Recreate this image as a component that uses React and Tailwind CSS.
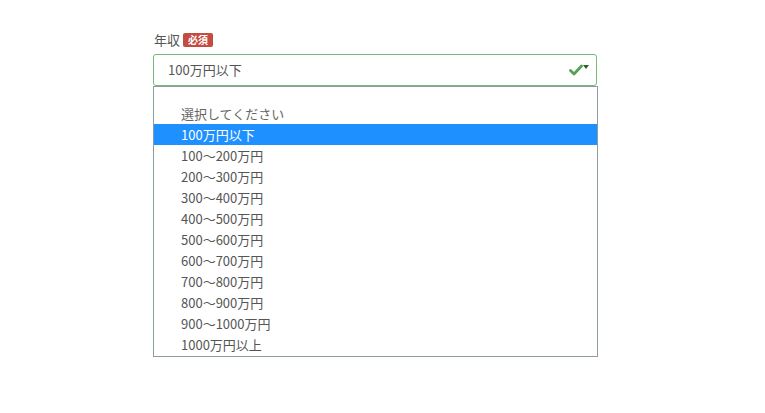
import React from 'react';

const options = [
  '100万円以下',
  '100～200万円',
  '200～300万円',
  '300～400万円',
  '400～500万円',
  '500～600万円',
  '600～700万円',
  '700～800万円',
  '800～900万円',
  '900～1000万円',
  '1000万円以上',
];

const font = { fontFamily: '"Noto Sans CJK JP", "Liberation Sans", sans-serif' };

export default function App() {
  const selected = '100万円以下';

  return (
    <div className="min-h-screen bg-white" style={font}>
      <div className="ml-[153px] w-[444px] pt-[32px]">
        {/* ラベル */}
        <div className="flex items-center h-[15px] mb-[7px]">
          <span className="text-[13px] text-[#555] ml-[1px] leading-none">年収</span>
          <span className="ml-[3px] bg-[#c44b41] text-white text-[10px] font-bold leading-none px-[5px] py-[2px] rounded-[2px]">
            必須
          </span>
        </div>

        {/* セレクトボックス */}
        <div className="flex items-center justify-between h-[32px] border border-[#78bb78] rounded-[3px] pl-[14px] pr-[7px]">
          <span className="text-[13px] text-[#555]">{selected}</span>
          <div className="flex items-start">
            <svg width="14" height="12" viewBox="0 0 14 12">
              <path d="M1.5 6.5 L5 10 L12.5 2" fill="none" stroke="#55a055" strokeWidth="2.8" strokeLinecap="round" strokeLinejoin="round" />
            </svg>
            <svg width="6" height="5" viewBox="0 0 6 5" className="mt-[1px]">
              <path d="M0 0 L6 0 L3 4 Z" fill="#2f5f2f" />
            </svg>
          </div>
        </div>

        {/* ドロップダウン */}
        <div className="border border-[#8d9ba3] pt-[16px] pb-[1px] w-[445px]">
          <div className="h-[21px] flex items-center pl-[27px] text-[13px] text-[#666]">選択してください</div>
          {options.map((o) => (
            <div
              key={o}
              className={
                o === selected
                  ? 'h-[21px] flex items-center pl-[27px] text-[13px] text-white bg-[#1e90ff]'
                  : 'h-[21px] flex items-center pl-[27px] text-[13px] text-[#555]'
              }
            >
              {o}
            </div>
          ))}
        </div>
      </div>
    </div>
  );
}
